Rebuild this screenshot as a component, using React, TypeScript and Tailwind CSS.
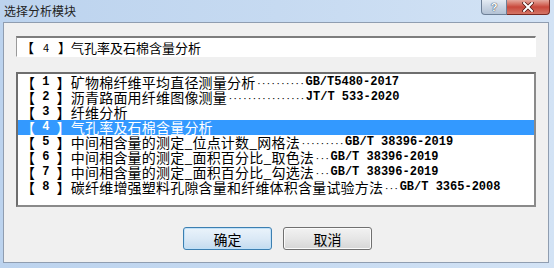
const rows = [
  { n: '1', name: '矿物棉纤维平均直径测量分析', dots: 10, code: 'GB/T5480-2017' },
  { n: '2', name: '沥青路面用纤维图像测量', dots: 16, code: 'JT/T 533-2020' },
  { n: '3', name: '纤维分析', dots: 0, code: '' },
  { n: '4', name: '气孔率及石棉含量分析', dots: 0, code: '' },
  { n: '5', name: '中间相含量的测定_位点计数_网格法', dots: 9, code: 'GB/T 38396-2019' },
  { n: '6', name: '中间相含量的测定_面积百分比_取色法', dots: 3, code: 'GB/T 38396-2019' },
  { n: '7', name: '中间相含量的测定_面积百分比_勾选法', dots: 3, code: 'GB/T 38396-2019' },
  { n: '8', name: '碳纤维增强塑料孔隙含量和纤维体积含量试验方法', dots: 3, code: 'GB/T 3365-2008' },
];

const selected = 3;

export default function App() {
  return (
    <div className="w-[554px] h-[268px] flex flex-col bg-gradient-to-r from-[#bcd3ee] via-[#c6daf1] to-[#d3e3f5] font-['Noto_Sans_CJK_SC',sans-serif] overflow-hidden select-none">
      {/* title bar */}
      <div className="h-[22px] flex items-start justify-between shrink-0">
        <span className="text-[12px] leading-[22px] text-[#222] pl-[4px]">选择分析模块</span>
        <div className="flex mr-[4px]">
          <div className="w-[26px] h-[15px] border border-t-0 border-[#6d7f96] rounded-bl-[4px] bg-gradient-to-b from-[#e4ebf3] via-[#c9d4e2] to-[#b3c2d5] flex items-center justify-center">
            <span className="text-[11px] leading-none font-bold text-white [text-shadow:0_0_1px_#2b3a4e,0_0_1px_#2b3a4e] font-['Liberation_Sans',sans-serif]">?</span>
          </div>
          <div className="w-[43px] h-[15px] border border-t-0 border-l-0 border-[#7a2a22] rounded-br-[4px] bg-gradient-to-b from-[#e4a89e] via-[#c8473b] to-[#d47566] flex items-center justify-center">
            <svg width="12" height="10" viewBox="0 0 12 10">
              <path d="M2 1 L10 9 M10 1 L2 9" stroke="#4a1410" strokeWidth="3.4" strokeLinecap="square" />
              <path d="M2 1 L10 9 M10 1 L2 9" stroke="#ffffff" strokeWidth="2" strokeLinecap="square" />
            </svg>
          </div>
        </div>
      </div>

      {/* client area */}
      <div className="flex-1 ml-[3px] mr-[5px] mb-[5px] border border-[#8f9db0] bg-[#f0f0f0] flex flex-col px-[12px]">
        {/* combo text */}
        <div className="mt-[13px] h-[21px] border-t-2 border-l border-b border-r border-t-[#7d7d7d] border-l-[#9a9a9a] border-b-white border-r-white bg-white flex items-center pl-[4px] text-[13px] leading-none text-black">
          <span>【</span>
          <span className="w-[24px] text-center text-[11px]">4</span>
          <span>】气孔率及石棉含量分析</span>
        </div>

        {/* list */}
        <div className="mt-[15px] h-[135px] border-2 border-[#8a8a8a] border-t-[#6e6e6e] border-l-[#6e6e6e] bg-white pt-[1px]">
          {rows.map((r, i) => (
            <div
              key={r.n}
              className={
                i === selected
                  ? 'h-[15px] flex items-center whitespace-pre pl-[3px] bg-[#3399ff] text-white'
                  : 'h-[15px] flex items-center whitespace-pre pl-[3px] text-black'
              }
            >
              <span className="text-[14px] leading-[15px]">【</span>
              <span className="font-['Liberation_Mono',monospace] font-bold text-[12px] leading-[15px]"> {r.n} </span>
              <span className="text-[14px] leading-[15px] tracking-[0.2px]">】{r.name}</span>
              {r.dots > 0 && (
                <span className="font-['Liberation_Mono',monospace] font-bold text-[8px] leading-[15px] pt-[2px] px-[1px]">
                  {'·'.repeat(r.dots)}
                </span>
              )}
              {r.code && (
                <span className="font-['Liberation_Mono',monospace] font-bold text-[12px] leading-[15px]">{r.code}</span>
              )}
            </div>
          ))}
        </div>

        {/* buttons */}
        <div className="mt-[20px] flex justify-center gap-[11px] pl-[3px]">
          <button className="w-[89px] h-[23px] rounded-[3px] border border-[#3c7fb1] bg-gradient-to-b from-[#eaf3fb] via-[#dbe9f6] to-[#c3dbef] text-[14px] leading-none text-black shadow-[inset_0_0_0_1px_#bfe0f8]">
            确定
          </button>
          <button className="w-[89px] h-[23px] rounded-[3px] border border-[#707070] bg-gradient-to-b from-[#f2f2f2] via-[#e6e6e6] to-[#d6d6d6] text-[14px] leading-none text-black shadow-[inset_0_0_0_1px_#fbfbfb]">
            取消
          </button>
        </div>
      </div>
    </div>
  );
}
